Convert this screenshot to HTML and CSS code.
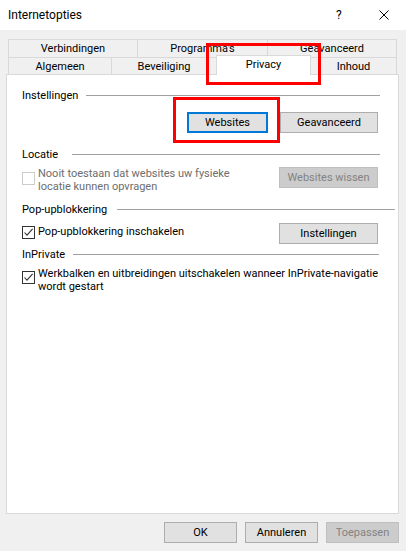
FILE: index.html
```html
<!DOCTYPE html>
<html lang="nl">
<head>
<meta charset="utf-8">
<title>Internetopties</title>
<link rel="stylesheet" href="styles.css">
</head>
<body>
<div class="window">
  <div class="titlebar">
    <span class="title">Internetopties</span>
    <span class="help">?</span>
    <svg class="close" width="10" height="10" viewBox="0 0 10 10"><path d="M0.5 0.5 L9.5 9.5 M9.5 0.5 L0.5 9.5" stroke="#000" stroke-width="1" fill="none"/></svg>
  </div>

  <div class="dialog">
    <div class="tabs">
      <div class="tab-row">
        <div class="tab w129">Verbindingen</div>
        <div class="tab w130">Programma's</div>
        <div class="tab w130 last">Geavanceerd</div>
      </div>
      <div class="tab-row row2">
        <div class="tab w103">Algemeen</div>
        <div class="tab w105">Beveiliging</div>
        <div class="tab selected">Privacy</div>
        <div class="tab w86 last noleft">Inhoud</div>
      </div>
    </div>

    <div class="panel">
      <div class="head head-instellingen">
        <span class="head-label">Instellingen</span><i class="rule"></i>
      </div>
      <div class="btn-row">
        <button class="btn btn-focus w81">Websites</button>
        <button class="btn w98">Geavanceerd</button>
      </div>

      <div class="head head-locatie">
        <span class="head-label">Locatie</span><i class="rule"></i>
      </div>
      <div class="opt-row row-locatie">
        <label class="check disabled label-locatie">
          <span class="box box-locatie"></span>
          <span class="text">Nooit toestaan dat websites uw fysieke locatie kunnen opvragen</span>
        </label>
        <button class="btn btn-disabled w99">Websites wissen</button>
      </div>

      <div class="head head-popup">
        <span class="head-label">Pop-upblokkering</span><i class="rule rule-long"></i>
      </div>
      <div class="opt-row row-popup">
        <label class="check label-popup">
          <span class="box checked box-popup"><svg width="11" height="11" viewBox="0 0 11 11"><path d="M1.5 5.5 L4 8.2 L9.6 1.8" stroke="#333" stroke-width="1.1" fill="none"/></svg></span>
          <span class="text">Pop-upblokkering inschakelen</span>
        </label>
        <button class="btn w99">Instellingen</button>
      </div>

      <div class="head head-inprivate">
        <span class="head-label">InPrivate</span><i class="rule rule-short"></i>
      </div>
      <div class="opt-row row-inprivate">
        <label class="check label-inprivate">
          <span class="box checked box-inprivate"><svg width="11" height="11" viewBox="0 0 11 11"><path d="M1.5 5.5 L4 8.2 L9.6 1.8" stroke="#333" stroke-width="1.1" fill="none"/></svg></span>
          <span class="text">Werkbalken en uitbreidingen uitschakelen wanneer InPrivate-navigatie wordt gestart</span>
        </label>
      </div>
    </div>

    <div class="footer">
      <button class="btn w73">OK</button>
      <button class="btn w73">Annuleren</button>
      <button class="btn btn-disabled w73">Toepassen</button>
    </div>
  </div>

  <div class="mark mark-tab"></div>
  <div class="mark mark-btn"></div>
</div>
</body>
</html>
```
FILE: styles.css
```css
* { box-sizing: border-box; }

html, body {
  margin: 0;
  padding: 0;
}

body {
  width: 406px;
  height: 551px;
  background: #f0f0f0;
  font-family: Roboto, "Liberation Sans", sans-serif;
  font-size: 11px;
  color: #000;
  overflow: hidden;
}

.window {
  position: relative;
  width: 406px;
  height: 551px;
}

/* Title bar */
.titlebar {
  height: 30px;
  background: #fff;
  display: flex;
  align-items: center;
  padding-left: 8px;
  font-size: 12px;
  line-height: 30px;
}
.title { flex: 1; }
.help {
  width: 6px;
  margin-right: 37px;
  font-size: 12px;
}
.close {
  display: block;
  margin-right: 17px;
}

/* Dialog body */
.dialog {
  padding: 9px 0 0 6px;
}

.tabs {
  margin-left: 2px;
  width: 389px;
}
.tab-row {
  display: flex;
  align-items: flex-start;
}
.tab {
  height: 18px;
  border-top: 1px solid #d9d9d9;
  border-left: 1px solid #d9d9d9;
  background: #f0f0f0;
  text-align: center;
  line-height: 17px;
  white-space: nowrap;
}
.tab.last { border-right: 1px solid #d9d9d9; }
.tab.noleft { border-left: 0; }
.row2 .tab {
  height: 17px;
  line-height: 17px;
}
.row2 .tab.selected {
  position: relative;
  z-index: 1;
  width: 95px;
  height: 20px;
  margin-top: -2px;
  margin-bottom: -1px;
  background: #fff;
  border-right: 1px solid #d9d9d9;
  line-height: 17px;
}
.w129 { width: 129px; }
.w130 { width: 130px; }
.w103 { width: 103px; }
.w105 { width: 105px; }
.w86 { width: 86px; }

/* Panel */
.panel {
  width: 393px;
  height: 440px;
  background: #fff;
  border: 1px solid #d9d9d9;
  padding: 14px 20px 0 15px;
}

.head {
  display: flex;
  align-items: center;
  height: 13px;
  line-height: 13px;
  white-space: nowrap;
}
.rule {
  flex: 1;
  height: 1px;
  background: #a0a0a0;
  margin-right: -2px;
}
.rule-long { margin-right: -17px; }
.rule-short { margin-right: -1px; }
.head-instellingen .head-label { margin-right: 8px; }
.head-locatie .head-label { margin-right: 14px; }
.head-popup .head-label { margin-right: 10px; }
.head-inprivate .head-label { margin-right: 8px; }

.head-locatie { margin-top: 15px; }
.head-popup { margin-top: 10px; }
.head-inprivate { margin-top: 4px; }

.btn-row {
  display: flex;
  justify-content: flex-end;
  gap: 12px;
  margin-top: 10px;
}

/* Buttons */
.btn {
  height: 21px;
  padding: 0;
  margin: 0;
  font-family: inherit;
  font-size: 11px;
  line-height: 19px;
  color: #000;
  background: #e1e1e1;
  border: 1px solid #adadad;
  border-radius: 0;
  text-align: center;
  white-space: nowrap;
}
.btn-focus {
  border: 2px solid #0078d7;
  line-height: 17px;
}
.btn-disabled {
  background: #cccccc;
  border-color: #bfbfbf;
  color: #838383;
}
.w81 { width: 81px; }
.w98 { width: 98px; }
.w99 { width: 99px; }
.w73 { width: 73px; }

/* Option rows */
.opt-row {
  display: flex;
  justify-content: space-between;
  align-items: flex-start;
}
.row-locatie { margin-top: 6px; }
.row-popup { margin-top: 7px; }
.row-inprivate { margin-top: 6px; }

.check {
  display: flex;
  align-items: flex-start;
  gap: 3px;
  line-height: 13px;
}
.label-locatie { width: 222px; }
.label-popup { margin-top: 2px; }
.label-inprivate {
  flex: 0 0 366px;
  width: 366px;
}

.box {
  flex: 0 0 13px;
  width: 13px;
  height: 13px;
  border: 1px solid #333;
  background: #fff;
  display: block;
}
.box svg { display: block; }
.box-locatie { margin-top: 5px; }
.box-popup { margin-top: 1px; }
.box-inprivate { margin-top: 4px; }

.disabled { color: #6d6d6d; }
.disabled .box { border-color: #cccccc; }

/* Footer */
.footer {
  display: flex;
  justify-content: flex-end;
  gap: 8px;
  margin-top: 8px;
  padding-right: 7px;
}

/* Red annotation marks */
.mark {
  position: absolute;
  border: 3px solid #ff0000;
}
.mark-tab {
  left: 206px;
  top: 43px;
  width: 115px;
  height: 42px;
}
.mark-btn {
  left: 173px;
  top: 97px;
  width: 107px;
  height: 46px;
}
```
